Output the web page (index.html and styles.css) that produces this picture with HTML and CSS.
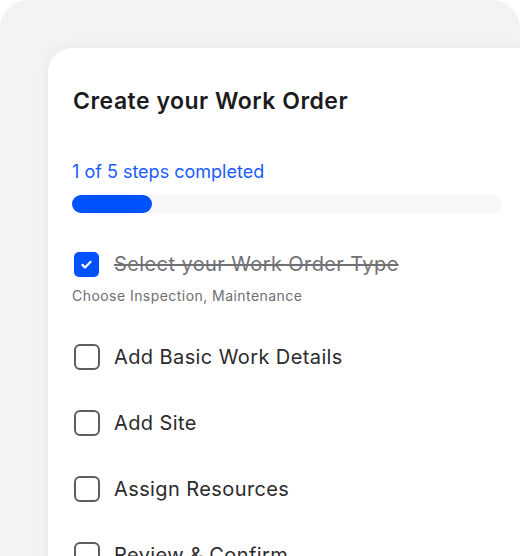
FILE: index.html
```html
<!DOCTYPE html>
<html lang="en">
<head>
    <meta charset="UTF-8">
    <meta name="viewport" content="width=device-width, initial-scale=1.0">
    <title>Create your Work Order</title>
    <link rel="stylesheet" href="styles.css">
</head>
<body>
    <div class="panel">
        <div class="card">
            <h1 class="title">Create your Work Order</h1>
            <div class="progress-label">1 of 5 steps completed</div>
            <div class="progress">
                <div class="progress-fill" style="width: 80px"></div>
            </div>
            <ul class="steps">
                <li class="step done">
                    <div class="step-row">
                        <span class="box">
                            <svg width="25" height="25" viewBox="0 0 25 25">
                                <path d="M8.4 12.9 L11 15.4 L16.4 9.9" fill="none" stroke="#fff" stroke-width="2.2" stroke-linecap="round" stroke-linejoin="round"/>
                            </svg>
                        </span>
                        <span class="step-name">Select your Work Order Type</span>
                    </div>
                    <div class="step-hint">Choose Inspection, Maintenance</div>
                </li>
                <li class="step">
                    <div class="step-row">
                        <span class="box"></span>
                        <span class="step-name">Add Basic Work Details</span>
                    </div>
                </li>
                <li class="step">
                    <div class="step-row">
                        <span class="box"></span>
                        <span class="step-name">Add Site</span>
                    </div>
                </li>
                <li class="step">
                    <div class="step-row">
                        <span class="box"></span>
                        <span class="step-name">Assign Resources</span>
                    </div>
                </li>
                <li class="step">
                    <div class="step-row">
                        <span class="box"></span>
                        <span class="step-name">Review &amp; Confirm</span>
                    </div>
                </li>
            </ul>
        </div>
    </div>
</body>
</html>
```

FILE: styles.css
```css
/* Page */
body {
    margin: 0;
    background: #ffffff;
    font-family: Inter, "Noto Sans", sans-serif;
    height: 556px;
    overflow: hidden;
}
.panel {
    background: #f3f3f3;
    border-radius: 28px 28px 0 0;
    padding: 48px 0 0 48px;
    height: 508px;
    overflow: hidden;
}
/* White card */
.card {
    background: #ffffff;
    border-radius: 24px 0 0 0;
    box-shadow: 0 0 14px rgba(0, 0, 0, 0.06);
    padding: 39px 18px 0 24px;
    height: 600px;
}
.title {
    margin: 0;
    font-size: 23px;
    line-height: 28px;
    font-weight: 600;
    letter-spacing: 0.5px;
    color: #1c1c1e;
    padding-left: 1px;
}
.progress-label {
    margin-top: 45px;
    font-size: 18px;
    line-height: 24px;
    color: #1a5cff;
}
.progress {
    margin-top: 11px;
    height: 18px;
    border-radius: 9px;
    background: #f7f7f7;
}
.progress-fill {
    height: 18px;
    border-radius: 9px;
    background: #0052ff;
}
/* Steps list */
.steps {
    list-style: none;
    margin: 38px 0 0 0;
    padding: 0;
}
.step {
    margin-bottom: 40px;
}
.step-row {
    display: flex;
    align-items: center;
    gap: 14px;
    padding-left: 2px;
}
.box {
    width: 22px;
    height: 22px;
    border: 2px solid #5c5c62;
    border-radius: 6px;
    flex-shrink: 0;
}
.done .box {
    width: 25px;
    height: 25px;
    border: none;
    border-radius: 5px;
    background: #0052ff;
    margin-right: 1px;
}
.box svg {
    display: block;
}
.step-name {
    font-size: 20px;
    line-height: 26px;
    letter-spacing: 0.4px;
    color: #2b2b2e;
}
.done .step-name {
    color: #707075;
    text-decoration: line-through;
}
.step-hint {
    margin-top: 9px;
    font-size: 14px;
    line-height: 20px;
    letter-spacing: 0.45px;
    color: #6e6e73;
}
.done {
    margin-bottom: 38px;
}
```
